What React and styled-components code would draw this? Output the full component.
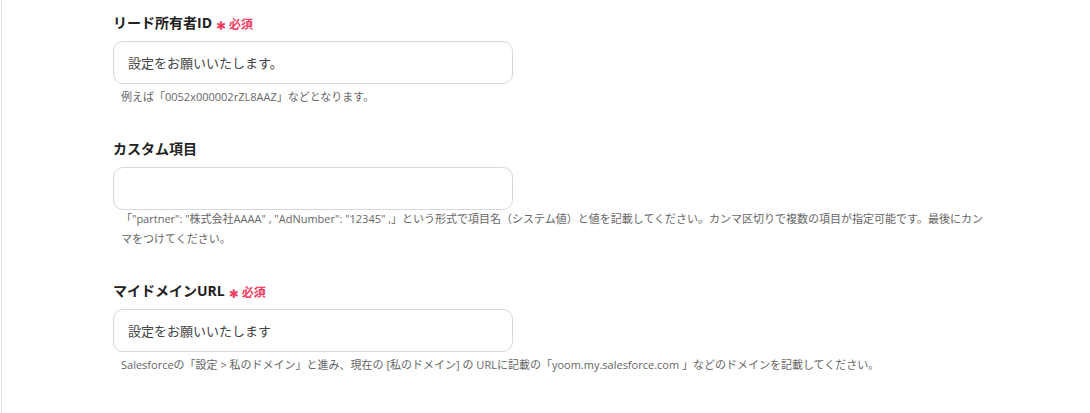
import React from "react";
import styled, { createGlobalStyle } from "styled-components";

const Global = createGlobalStyle`
  html, body { margin: 0; padding: 0; background: #fff; }
  body { font-family: "Open Sans", "Noto Sans CJK JP", sans-serif; }
`;

const Page = styled.div`
  margin-left: 1px;
  border-left: 1px solid #e4e4e4;
  min-height: 413px;
  box-sizing: border-box;
  padding: 13px 0 0 111px;
`;

const Form = styled.div`
  width: 876px;
  display: flex;
  flex-direction: column;
  gap: 32px;
`;

const Field = styled.div`
  display: flex;
  flex-direction: column;
`;

const Label = styled.div`
  display: flex;
  align-items: center;
  gap: 4px;
  height: 20px;
  font-size: 14px;
  font-weight: 700;
  line-height: 20px;
  color: #222;
  margin-bottom: 8px;
`;

const Required = styled.span`
  display: inline-flex;
  align-items: center;
  gap: 3px;
  margin-top: 3px;
  color: #f23b5f;
  font-size: 12px;
  font-weight: 700;
  line-height: 1;
`;

const Star = styled.span`
  font-family: "DejaVu Sans", sans-serif;
  font-size: 12px;
  line-height: 1;
  margin-top: 2px;
`;

const Input = styled.input`
  box-sizing: border-box;
  width: 400px;
  height: 43px;
  border: 1px solid #d5d8dd;
  border-radius: 10px;
  padding: 0 14px;
  font-family: inherit;
  font-size: 13px;
  color: #444;
  background: #fff;
  outline: none;
`;

const Help = styled.div`
  margin-top: ${(p) => (p.$tight ? "-1px" : "3px")};
  padding-left: 8px;
  font-size: 11px;
  line-height: 20px;
  color: #666;
`;

export default function App() {
  return (
    <>
      <Global />
      <Page>
        <Form>
          <Field>
            <Label>
              リード所有者ID
              <Required>
                <Star>✱</Star>必須
              </Required>
            </Label>
            <Input readOnly defaultValue="設定をお願いいたします。" />
            <Help>例えば「0052x000002rZL8AAZ」などとなります。</Help>
          </Field>
          <Field>
            <Label>カスタム項目</Label>
            <Input readOnly defaultValue="" />
            <Help $tight>
              「"partner": "株式会社AAAA" , "AdNumber": "12345" ,」という形式で項目名（システム値）と値を記載してください。カンマ区切りで複数の項目が指定可能です。最後にカンマをつけてください。
            </Help>
          </Field>
          <Field>
            <Label>
              マイドメインURL
              <Required>
                <Star>✱</Star>必須
              </Required>
            </Label>
            <Input readOnly defaultValue="設定をお願いいたします" />
            <Help>
              Salesforceの「設定 &gt; 私のドメイン」と進み、現在の [私のドメイン] の URLに記載の「yoom.my.salesforce.com 」などのドメインを記載してください。
            </Help>
          </Field>
        </Form>
      </Page>
    </>
  );
}
